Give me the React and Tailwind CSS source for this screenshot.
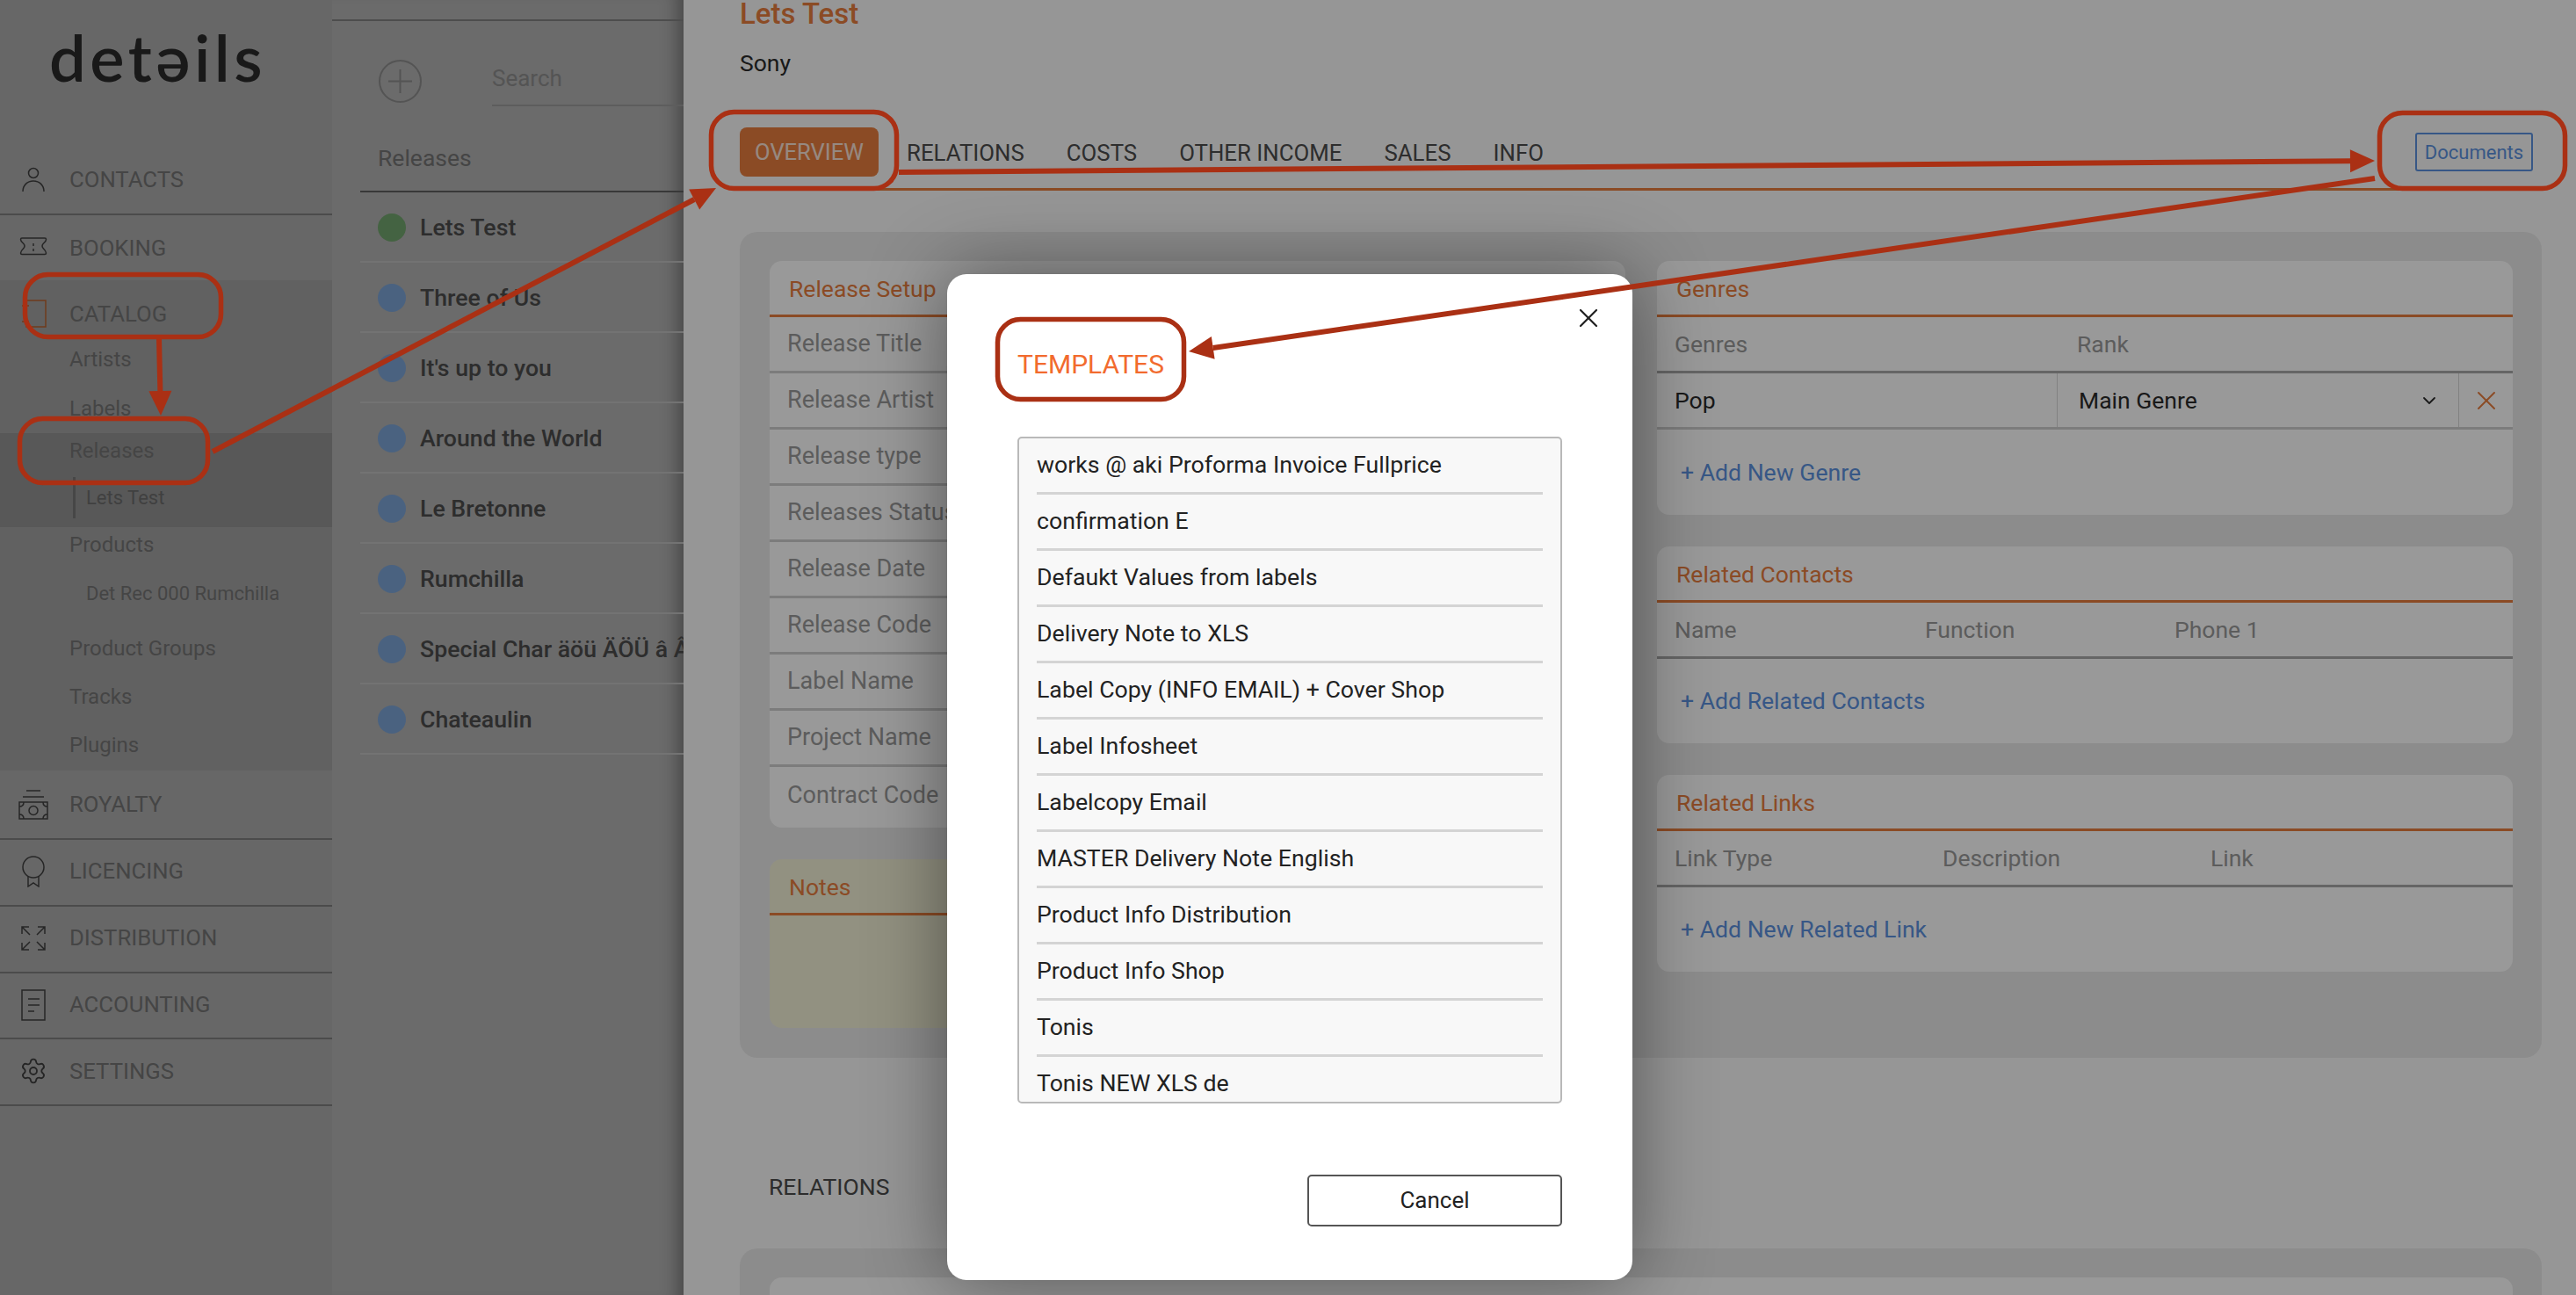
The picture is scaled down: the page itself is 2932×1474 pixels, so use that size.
import React from "react";
import { ChevronDown, Settings, X } from "lucide-react";

const RED = "#aa3014";

const UserIcon = () => (
  <svg width="32" height="32" viewBox="0 0 32 32" fill="none" stroke="currentColor" strokeWidth="1.5">
    <circle cx="16" cy="8" r="5.5" />
    <path d="M4 29c0-7 5-12 12-12s12 5 12 12" />
  </svg>
);

const TicketIcon = () => (
  <svg width="34" height="28" viewBox="0 0 34 28" fill="none" stroke="currentColor" strokeWidth="1.5">
    <path d="M4 3h26c1 0 1.500.5 1.500 1.500 0 2-1.500 3-3 4.500-2 2-2 4 0 6 1.500 1.500 3 3 3 5 0 1-.5 1.500-1.500 1.500H4c-1 0-1.500-.5-1.500-1.500 0-2 1.500-3.500 3-5 2-2 2-4 0-6-1.500-1.500-3-2.500-3-4.500C2.500 3.500 3 3 4 3z" />
    <path d="M17 9v3M17 15v3" />
  </svg>
);

const CatalogIcon = () => (
  <svg width="32" height="32" viewBox="0 0 32 32" fill="none" stroke="#b9632f" strokeWidth="1.5">
    <rect x="8" y="1" width="22" height="30" />
    <path d="M3 7h8M3 25h8" />
  </svg>
);

const MoneyIcon = () => (
  <svg width="34" height="36" viewBox="0 0 34 36" fill="none" stroke="currentColor" strokeWidth="1.5">
    <path d="M9 2h16M5 9h24" />
    <rect x="1" y="15" width="32" height="19" />
    <circle cx="17" cy="24.500" r="5" />
    <path d="M1 20c3 0 5-2 5-5M33 20c-3 0-5-2-5-5M1 29c3 0 5 2 5 5M33 29c-3 0-5 2-5 5" />
  </svg>
);

const AwardIcon = () => (
  <svg width="28" height="36" viewBox="0 0 28 36" fill="none" stroke="currentColor" strokeWidth="1.5">
    <circle cx="14" cy="13" r="12" />
    <path d="M8 24v11l6-4 6 4V24" />
  </svg>
);

const ExpandIcon = () => (
  <svg width="30" height="30" viewBox="0 0 30 30" fill="none" stroke="currentColor" strokeWidth="1.5">
    <path d="M2 10V2h8M2 2l9 9M20 2h8v8M28 2l-9 9M2 20v8h8M2 28l9-9M28 20v8h-8M28 28l-9-9" />
  </svg>
);

const DocIcon = () => (
  <svg width="30" height="38" viewBox="0 0 30 38" fill="none" stroke="currentColor" strokeWidth="1.5">
    <rect x="2" y="2" width="26" height="34" />
    <path d="M9 12h13M9 19h13M9 26h7" />
  </svg>
);

const NavRow = ({ icon, label, className }) => (
  <div className={`flex items-center text-[25.700px] text-[#747474] ${className}`}>
    <div className="flex w-[79px] justify-center pr-[3px] text-[#3f3f3f]">{icon}</div>
    <span>{label}</span>
  </div>
);

const SubRow = ({ label, className }) => (
  <div className={`flex items-center pl-[79px] text-[24px] text-[#747474] ${className}`}>{label}</div>
);

const Sidebar = () => (
  <aside className="flex w-[378px] shrink-0 flex-col bg-[#acacac]">
    <div className="h-[168px] pl-[56px] pt-[23px] font-['Lato',sans-serif] text-[74px] font-semibold leading-[84px] tracking-[4.500px] text-[#2a2a2a]">
      detəils
    </div>
    <NavRow icon={<UserIcon />} label="CONTACTS" className="h-[77px] border-b-2 border-[#7d7d7d] pb-[2px]" />
    <NavRow icon={<TicketIcon />} label="BOOKING" className="h-[74px]" />
    <div className="flex h-[558px] flex-col bg-[#a2a2a2]">
      <NavRow icon={<CatalogIcon />} label="CATALOG" className="h-[62px] pt-[14px]" />
      <SubRow label="Artists" className="h-[56px]" />
      <SubRow label="Labels" className="h-[56px]" />
      <div className="h-[107px] bg-[#939393]">
        <SubRow label="Releases" className="h-[40px] text-[#6c6c6c]" />
        <div className="flex h-[67px] items-center pl-[83px]">
          <div className="flex h-[47px] items-center border-l-[3px] border-[#777777] pl-[12px] text-[22px] text-[#6c6c6c]">
            Lets Test
          </div>
        </div>
      </div>
      <SubRow label="Products" className="h-[40px]" />
      <div className="flex h-[70px] items-center pl-[98px] text-[22px] text-[#747474]">Det Rec 000 Rumchilla</div>
      <SubRow label="Product Groups" className="h-[56px]" />
      <SubRow label="Tracks" className="h-[53px]" />
      <SubRow label="Plugins" className="h-[58px]" />
    </div>
    <NavRow icon={<MoneyIcon />} label="ROYALTY" className="h-[79px] border-b-2 border-[#7d7d7d]" />
    <NavRow icon={<AwardIcon />} label="LICENCING" className="h-[76px] border-b-2 border-[#7d7d7d] pb-[3px]" />
    <NavRow icon={<ExpandIcon />} label="DISTRIBUTION" className="h-[76px] border-b-2 border-[#7d7d7d] pb-[3px]" />
    <NavRow icon={<DocIcon />} label="ACCOUNTING" className="h-[75px] border-b-2 border-[#7d7d7d] pb-[2px]" />
    <NavRow icon={<Settings size={32} strokeWidth={1.4} />} label="SETTINGS" className="h-[76px] border-b-2 border-[#7d7d7d] pb-[2px]" />
  </aside>
);

const releases = [
  { name: "Lets Test", dot: "bg-[#72a56e]" },
  { name: "Three of Us", dot: "bg-[#7ca4d6]" },
  { name: "It's up to you", dot: "bg-[#7ca4d6]" },
  { name: "Around the World", dot: "bg-[#7ca4d6]" },
  { name: "Le Bretonne", dot: "bg-[#7ca4d6]" },
  { name: "Rumchilla", dot: "bg-[#7ca4d6]" },
  { name: "Special Char äöü ÄÖÜ â Â", dot: "bg-[#7ca4d6]" },
  { name: "Chateaulin", dot: "bg-[#7ca4d6]" },
];

const ReleaseList = () => (
  <section className="flex w-[400px] shrink-0 flex-col overflow-hidden bg-[#b2b2b2] shadow-[inset_-24px_0_20px_-18px_rgba(0,0,0,0.35)]">
    <div className="h-[24px] border-b-2 border-[#808080]" />
    <div className="flex h-[103px] items-start pl-[53px] pt-[44px]">
      <div className="flex h-[49px] w-[49px] shrink-0 items-center justify-center rounded-full border-2 border-[#8c8c8c] text-[#8c8c8c]">
        <svg width="29" height="29" viewBox="0 0 29 29" stroke="currentColor" strokeWidth="2">
          <path d="M14.500 1v27M1 14.500h27" />
        </svg>
      </div>
      <div className="ml-[80px] h-[53px] flex-1 border-b-2 border-[#9c9c9c] pt-[3px] text-[26px] leading-[36px] text-[#8d8d8d]">Search</div>
    </div>
    <div className="ml-[32px] flex h-[92px] flex-col">
      <div className="flex h-[90px] items-end pb-[22px] pl-[20px] text-[26.500px] leading-[30px] text-[#747474]">Releases</div>
      <div className="h-[2px] shrink-0 bg-[#5e5e5e]" />
    </div>
    {releases.map((r) => (
      <div key={r.name} className="ml-[32px] flex h-[80px] shrink-0 items-center whitespace-nowrap border-b-2 border-[#c0c0c0] pl-[20px] pt-[2px] text-[26.700px] font-medium text-[#4c4c4c]">
        <span className={`mr-[16px] h-[32px] w-[32px] shrink-0 rounded-full ${r.dot}`} />
        {r.name}
      </div>
    ))}
  </section>
);

const CardTitle = ({ children }) => (
  <div className="flex h-[64px] items-center border-b-[3px] border-[#e87d3e] pl-[22px] pt-[3px] text-[26.500px] text-[#e87d3e]">{children}</div>
);

const setupRows = [
  "Release Title",
  "Release Artist",
  "Release type",
  "Releases Status",
  "Release Date",
  "Release Code",
  "Label Name",
  "Project Name",
  "Contract Code",
];

const TableCard = ({ title, cols, action, height }) => (
  <div className={`flex flex-col rounded-[14px] bg-white ${height}`}>
    <CardTitle>{title}</CardTitle>
    <div className="flex h-[64px] items-center border-b-[3px] border-[#a8a8a8] text-[26.500px] text-[#9a9a9a]">
      {cols.map((c) => (
        <div key={c.label} className={c.width}>{c.label}</div>
      ))}
    </div>
    <div className="flex flex-1 items-center pl-[27px] text-[26.600px] text-[#5c92e0]">{action}</div>
  </div>
);

const Overview = () => (
  <div className="mr-[39px] grid h-[940px] grid-cols-2 items-start gap-x-[36px] rounded-[20px] bg-[#eaeaea] p-[33px_33px_0_34px]">
    <div className="flex flex-col gap-y-[36px]">
      <div className="h-[645px] rounded-[14px] bg-white">
        <CardTitle>Release Setup</CardTitle>
        {setupRows.map((label, i) => (
          <div key={label} className={`flex h-[64px] items-center pl-[20px] text-[27px] text-[#9a9a9a] ${i < setupRows.length - 1 ? "border-b-[3px] border-[#cfcfcf]" : ""}`}>
            {label}
          </div>
        ))}
      </div>
      <div className="h-[192px] rounded-[14px] bg-[#f4f2d8]">
        <CardTitle>Notes</CardTitle>
      </div>
    </div>
    <div className="flex flex-col gap-y-[36px]">
      <div className="flex h-[289px] flex-col rounded-[14px] bg-white">
        <CardTitle>Genres</CardTitle>
        <div className="flex h-[64px] items-center border-b-[3px] border-[#a8a8a8] text-[26.500px] text-[#9a9a9a]">
          <div className="w-[478px] pl-[20px]">Genres</div>
          <div>Rank</div>
        </div>
        <div className="flex h-[64px] items-center border-b-[3px] border-[#cfcfcf] text-[26.500px] text-[#2b2b2b]">
          <div className="flex h-full w-[456px] items-center border-r border-[#d8d8d8] pl-[20px]">Pop</div>
          <div className="flex h-full w-[457px] items-center justify-between border-r border-[#d8d8d8] pl-[24px] pr-[21px]">
            Main Genre
            <ChevronDown size={24} strokeWidth={1.8} />
          </div>
          <div className="flex flex-1 justify-center text-[#e87d3e]">
            <X size={36} strokeWidth={1.3} />
          </div>
        </div>
        <div className="flex flex-1 items-center pl-[27px] text-[26.600px] text-[#5c92e0]">+ Add New Genre</div>
      </div>
      <TableCard
        title="Related Contacts"
        action="+ Add Related Contacts"
        height="h-[224px]"
        cols={[
          { label: "Name", width: "w-[305px] pl-[20px]" },
          { label: "Function", width: "w-[284px]" },
          { label: "Phone 1", width: "w-[200px]" },
        ]}
      />
      <TableCard
        title="Related Links"
        action="+ Add New Related Link"
        height="h-[224px]"
        cols={[
          { label: "Link Type", width: "w-[325px] pl-[20px]" },
          { label: "Description", width: "w-[305px]" },
          { label: "Link", width: "w-[200px]" },
        ]}
      />
    </div>
  </div>
);

const DetailPanel = () => (
  <main className="flex min-w-0 flex-1 flex-col bg-[#fafafa] pl-[64px]">
    <div className="h-[32px] text-[33px] font-medium leading-[32px] text-[#e87d3e]">Lets Test</div>
    <div className="mt-[24px] text-[26.500px] leading-[32px] text-[#2b2b2b]">Sony</div>
    <div className="mr-[39px] mt-[57px] flex h-[72px] items-start border-b-[3px] border-[#e87d3e]">
      <div className="flex h-[56px] w-[158px] items-center justify-center rounded-[8px] bg-[#e87d3e] text-[25.500px] text-white/80">OVERVIEW</div>
      <div className="ml-[32px] flex h-[56px] items-center gap-x-[48px] pt-[2px] text-[25.800px] text-[#4c4c4c]">
        <span>RELATIONS</span>
        <span>COSTS</span>
        <span>OTHER INCOME</span>
        <span>SALES</span>
        <span>INFO</span>
      </div>
      <div className="ml-auto mr-[10px] mt-[6px] flex h-[44px] w-[134px] items-center justify-center rounded-[3px] border-2 border-[#5c92e0] text-[22px] text-[#5c92e0]">
        Documents
      </div>
    </div>
    <div className="mt-[47px]">
      <Overview />
    </div>
    <div className="ml-[33px] mt-[132px] text-[26.500px] leading-[30px] text-[#4c4c4c]">RELATIONS</div>
    <div className="mr-[39px] mt-[55px] flex-1 rounded-t-[20px] bg-[#eaeaea] pl-[34px] pr-[33px] pt-[33px]">
      <div className="h-full rounded-t-[14px] bg-white" />
    </div>
  </main>
);

const templates = [
  "works @ aki Proforma Invoice Fullprice",
  "confirmation E",
  "Defaukt Values from labels",
  "Delivery Note to XLS",
  "Label Copy (INFO EMAIL) + Cover Shop",
  "Label Infosheet",
  "Labelcopy Email",
  "MASTER Delivery Note English",
  "Product Info Distribution",
  "Product Info Shop",
  "Tonis",
  "Tonis NEW XLS de",
];

const TemplatesModal = () => (
  <div className="absolute left-[1078px] top-[312px] flex h-[1145px] w-[780px] flex-col rounded-[22px] bg-white pl-[80px] pr-[80px] shadow-[0_0_90px_rgba(0,0,0,0.45)]">
    <div className="absolute right-[32px] top-[32px] text-[#222222]">
      <X size={36} strokeWidth={1.5} />
    </div>
    <div className="flex h-[185px] shrink-0 items-start pt-[85px] text-[30px] leading-[36px] text-[#f26b2e]">TEMPLATES</div>
    <div className="h-[759px] shrink-0 overflow-hidden rounded-[5px] border-2 border-[#b9b9b9] bg-[#f8f8f8] px-[20px]">
      {templates.map((t) => (
        <div key={t} className="flex h-[64px] items-center border-b-[3px] border-[#d4d4d4] text-[26.700px] text-[#222222]">
          {t}
        </div>
      ))}
    </div>
    <div className="mt-[81px] flex justify-end">
      <button className="h-[59px] w-[290px] rounded-[5px] border-2 border-[#555555] text-[26px] text-[#222222]">Cancel</button>
    </div>
  </div>
);

const Arrow = ({ from, to, size = 28, half = 13 }) => {
  const dx = to[0] - from[0];
  const dy = to[1] - from[1];
  const len = Math.hypot(dx, dy);
  const ux = dx / len;
  const uy = dy / len;
  const bx = to[0] - ux * size;
  const by = to[1] - uy * size;
  return (
    <g>
      <line x1={from[0]} y1={from[1]} x2={bx} y2={by} stroke={RED} strokeWidth="6" />
      <polygon
        fill={RED}
        points={`${to[0]},${to[1]} ${bx - uy * half},${by + ux * half} ${bx + uy * half},${by - ux * half}`}
      />
    </g>
  );
};

const Callout = ({ x, y, w, h }) => (
  <rect x={x} y={y} width={w} height={h} rx="26" fill="none" stroke={RED} strokeWidth="5.500" />
);

// red markup drawn over the finished screenshot
const Annotations = () => (
  <svg className="pointer-events-none absolute inset-0" width="2932" height="1474" viewBox="0 0 2932 1474">
    <Callout x={28.500} y={312.500} w={223} h={71} />
    <Callout x={22.500} y={476.500} w={214} h={73} />
    <Callout x={809.500} y={127.500} w={211} h={87} />
    <Callout x={2708.500} y={128.500} w={211} h={86} />
    <Callout x={1135.500} y={363.500} w={212} h={91} />
    <Arrow from={[181, 386]} to={[183, 473]} />
    <Arrow from={[242, 514]} to={[815, 214]} />
    <Arrow from={[1023, 196]} to={[2703, 183]} />
    <Arrow from={[2703, 203]} to={[1353, 400]} />
  </svg>
);

const App = () => (
  <div className="relative flex h-[1474px] w-[2932px] overflow-hidden font-['Roboto',sans-serif]">
    <Sidebar />
    <ReleaseList />
    <DetailPanel />
    <div className="absolute inset-0 bg-black/40" />
    <TemplatesModal />
    <Annotations />
  </div>
);

export default App;
